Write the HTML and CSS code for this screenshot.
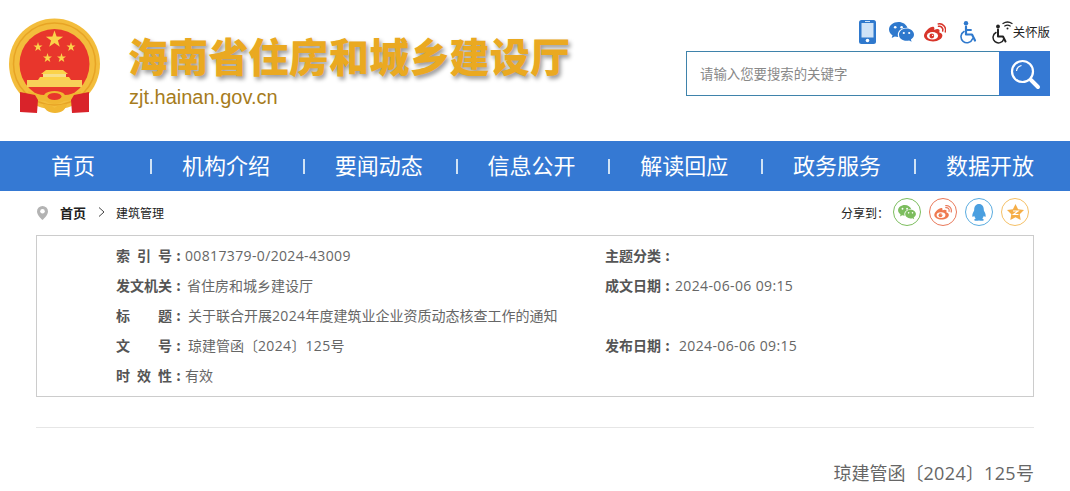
FILE: index.html
```html
<!DOCTYPE html>
<html lang="zh-CN">
<head>
  <meta charset="UTF-8">
  <title>海南省住房和城乡建设厅</title>
  <link rel="stylesheet" href="styles.css">
</head>
<body>
  <svg class="defs" width="0" height="0">
    <symbol id="wechat" viewBox="0 0 25 21">
      <path d="M9.5 0C4.3 0 0 3.3 0 7.5c0 2.4 1.4 4.4 3.5 5.8L2.7 16l3.1-1.6c1.1.3 2.2.5 3.4.5-.3-.8-.4-1.5-.4-2.2C8.800 8.700 12.600 5.600 18.500 5.800 17.300 2.400 13.700 0 9.500 0z"/>
      <path d="M25 12.700c0-3.400-3.300-6.100-7.500-6.100S10 9.300 10 12.700s3.300 6.100 7.500 6.100c.9 0 1.800-.1 2.600-.4l2.500 1.400-.7-2.300c1.600-1.100 3.100-2.800 3.100-4.800z"/>
      <circle cx="6.200" cy="5.200" r="1.300" fill="#fff"/>
      <circle cx="12.600" cy="5.200" r="1.300" fill="#fff"/>
      <circle cx="14.800" cy="11" r="1.100" fill="#fff"/>
      <circle cx="20.200" cy="11" r="1.100" fill="#fff"/>
    </symbol>
    <symbol id="weibo" viewBox="0 0 22 19">
      <path d="M9.200 18.500C4.300 18.500 0 16.200 0 12.800c0-1.800 1.100-3.800 3.100-5.800 2.700-2.700 5.800-3.900 6.900-2.800.5.500.5 1.300.2 2.300-.2.500.4.200.4.200 2.100-.9 4-.9 4.700.1.400.5.300 1.300 0 2.100-.2.400 0 .5.300.6 1.300.4 2.800 1.400 2.800 3.100 0 2.900-4 5.900-9.400 5.900z"/>
      <ellipse cx="8.500" cy="12.800" rx="5.600" ry="3.700" fill="#fff"/>
      <circle cx="7.800" cy="13" r="2.400"/>
      <circle cx="8.600" cy="12.400" r=".6" fill="#fff"/>
      <path d="M14.500 3.300c2.500-.5 5 1.800 4.200 4.800" fill="none" stroke="currentColor" stroke-width="1.500" stroke-linecap="round"/>
      <path d="M14.200 .9c4.300-.9 8.500 3 7.100 8" fill="none" stroke="currentColor" stroke-width="1.500" stroke-linecap="round"/>
    </symbol>
  </svg>

  <header class="top">
    <svg class="emblem" width="100" height="100" viewBox="5 17 100 100">
      <circle cx="54.500" cy="64" r="45.500" fill="#f3bd3c"/>
      <circle cx="54.500" cy="64" r="41" fill="none" stroke="#e7a425" stroke-width="1.500"/>
      <circle cx="54.500" cy="64" r="35" fill="#e8362c"/>
      <polygon fill="#fbd34a" points="54.500,30.500 56.600,36.600 63.100,36.700 57.900,40.600 59.800,46.800 54.500,43.100 49.200,46.800 51.100,40.600 45.900,36.700 52.400,36.600"/>
      <polygon fill="#fbd34a" points="38,42 39.100,45.400 42.500,45.400 39.800,47.500 40.800,51 38,48.900 35.200,51 36.200,47.500 33.500,45.400 36.900,45.400"/>
      <polygon fill="#fbd34a" points="71,42 72.100,45.400 75.500,45.400 72.800,47.500 73.800,51 71,48.900 68.200,51 69.200,47.500 66.500,45.400 69.900,45.400"/>
      <polygon fill="#fbd34a" points="47.500,53 48.600,56.400 52,56.400 49.300,58.500 50.300,62 47.500,59.900 44.700,62 45.700,58.500 43,56.400 46.400,56.400"/>
      <polygon fill="#fbd34a" points="61.500,53 62.600,56.400 66,56.400 63.300,58.500 64.300,62 61.500,59.900 58.700,62 59.700,58.500 57,56.400 60.400,56.400"/>
      <path d="M46 70h17l5 4h-27zM40 77h29l2 3H38z" fill="#fbd34a"/>
      <rect x="43" y="74" width="23" height="3" fill="#f7e08a"/>
      <rect x="27" y="80" width="55" height="7" fill="#f8cf59"/>
      <path d="M28 91c7 2 12 4 16 4 2-3 6-4 10.500-4s8.500 1 10.500 4c4 0 9-2 16-4l-2 6c-6 3-11 4-15 4-3 2-6 3-9.500 3s-6.500-1-9.500-3c-4 0-9-1-15-4z" fill="#f0b631"/>
      <ellipse cx="54.500" cy="96.500" rx="7" ry="3.500" fill="#e8362c"/>
      <path d="M20 92l15 3 3 5-1 13-17-1zM89 92l-15 3-3 5 1 13 17-1z" fill="#d9232a"/>
      <path d="M43 104c4 0 8 1 11.500 4 3.500-3 7.500-4 12.500-4-1 5-5 9-12 9s-11-4-12-9z" fill="#f0b631"/>
    </svg>
    <div class="brand">
      <div class="site-name">海南省住房和城乡建设厅</div>
      <div class="site-url">zjt.hainan.gov.cn</div>
    </div>
    <div class="tools">
      <div class="tool-icons">
        <svg class="ic-blue ic-phone" width="17" height="24" viewBox="0 0 17 24">
          <rect width="17" height="24" rx="2.500" fill="#2f79cd"/>
          <rect x="2.500" y="3" width="12" height="14.500" fill="#cfe3f7"/>
          <rect x="6" y="1" width="5" height="1" fill="#cfe3f7"/>
          <circle cx="8.500" cy="20.500" r="1.800" fill="#fff"/>
        </svg>
        <svg class="ic-blue" width="25" height="21"><use href="#wechat"/></svg>
        <svg class="ic-red" width="22" height="19"><use href="#weibo"/></svg>
        <svg class="ic-blue" width="18" height="23" viewBox="0 0 18 23">
          <circle cx="6" cy="2.200" r="2.200" fill="#2f79cd"/>
          <path d="M6 5.500v8h6l3 6" fill="none" stroke="#2f79cd" stroke-width="2.200" stroke-linecap="round" stroke-linejoin="round"/>
          <path d="M6 9h5" stroke="#2f79cd" stroke-width="1.800" stroke-linecap="round"/>
          <path d="M4 10.500a6 6 0 1 0 8.600 7.300" fill="none" stroke="#2f79cd" stroke-width="1.600" stroke-linecap="round"/>
        </svg>
        <div class="care">
          <svg width="21" height="23" viewBox="0 0 21 23">
            <circle cx="6" cy="5.500" r="1.900" fill="#222"/>
            <path d="M6 8.500v7h5l2.500 5" fill="none" stroke="#222" stroke-width="2" stroke-linecap="round" stroke-linejoin="round"/>
            <path d="M4 11.500a5.500 5.500 0 1 0 7.800 6.500" fill="none" stroke="#222" stroke-width="1.500" stroke-linecap="round"/>
            <path d="M11 2.500a8 8 0 0 1 9 0M12.800 5a5 5 0 0 1 5.400 0" fill="none" stroke="#222" stroke-width="1.300" stroke-linecap="round"/>
            <circle cx="15.500" cy="7.500" r="1" fill="#222"/>
          </svg>
          <span>关怀版</span>
        </div>
      </div>
      <div class="search">
        <div class="search-text">请输入您要搜索的关键字</div>
        <div class="search-btn">
          <svg width="32" height="32" viewBox="0 0 32 32">
            <circle cx="13.500" cy="13.500" r="10.500" fill="none" stroke="#fff" stroke-width="2.200"/>
            <path d="M7.500 13a6.500 6.500 0 0 1 5-5.500" fill="none" stroke="#fff" stroke-width="1.200"/>
            <path d="M22 22l7 7" stroke="#fff" stroke-width="4" stroke-linecap="round"/>
          </svg>
        </div>
      </div>
    </div>
  </header>

  <nav class="nav">
    <a href="#">首页</a>
    <a href="#">机构介绍</a>
    <a href="#">要闻动态</a>
    <a href="#">信息公开</a>
    <a href="#">解读回应</a>
    <a href="#">政务服务</a>
    <a href="#">数据开放</a>
  </nav>

  <div class="main">
    <div class="crumbs">
      <svg class="pin" width="11" height="14" viewBox="0 0 11 14">
        <path d="M5.500 0a5.500 5.500 0 0 0-5.500 5.500C0 9.500 5.500 14 5.500 14S11 9.500 11 5.500A5.500 5.500 0 0 0 5.500 0z" fill="#b3b3b3"/>
        <circle cx="5.500" cy="5.300" r="2.300" fill="#fff"/>
      </svg>
      <b class="crumb-home">首页</b>
      <svg width="7" height="10" viewBox="0 0 7 10"><path d="M1 .5 6 5 1 9.500" fill="none" stroke="#444"/></svg>
      <span class="crumb-now">建筑管理</span>
      <div class="share">
        <span class="share-label">分享到：</span>
        <a class="share-btn green"><svg width="18" height="15"><use href="#wechat"/></svg></a>
        <a class="share-btn orange"><svg width="18" height="15"><use href="#weibo"/></svg></a>
        <a class="share-btn sky">
          <svg width="14" height="17" viewBox="0 0 14 17"><path d="M7 0C3.800 0 2.200 2.500 2.200 5.500c0 1-.2 1.500-.8 2.500C.5 9.500 0 11.500.5 12.800c.4.500 1.200-.3 1.600-1 .3 1.200.9 2.100 1.700 2.800-1 .4-1.800 1-1.500 1.600.4.800 3 .8 4.700.3 1.700.5 4.300.5 4.700-.3.300-.6-.5-1.200-1.500-1.600.8-.7 1.400-1.600 1.700-2.800.4.700 1.200 1.500 1.600 1C14 11.500 13.500 9.500 12.600 8c-.6-1-.8-1.500-.8-2.500C11.800 2.500 10.200 0 7 0z"/></svg>
        </a>
        <a class="share-btn amber">
          <svg width="17" height="16" viewBox="0 0 17 16"><path d="M8.500 0l2.600 5.300 5.900.8-4.300 4.100 1 5.800-5.200-2.700-5.200 2.700 1-5.800L0 6.100l5.900-.8z"/><path d="M6 7h5l-4.500 3.500h5" fill="none" stroke="#fff" stroke-width="1.200"/></svg>
        </a>
      </div>
    </div>

    <div class="info">
      <div class="info-row">
        <div class="info-cell"><b class="label"><span class="name">索引号</span><i>:</i></b><span class="num">00817379-0/2024-43009</span></div>
        <div class="info-cell"><b class="label"><span class="name">主题分类</span><i>:</i></b></div>
      </div>
      <div class="info-row">
        <div class="info-cell"><b class="label"><span class="name">发文机关</span><i>:</i></b><span class="wide">省住房和城乡建设厅</span></div>
        <div class="info-cell"><b class="label"><span class="name">成文日期</span><i>:</i></b><span class="num date">2024-06-06 09:15</span></div>
      </div>
      <div class="info-row">
        <div class="info-cell"><b class="label"><span class="name">标题</span><i>:</i></b><span class="wider">关于联合开展<span class="num">2024</span>年度建筑业企业资质动态核查工作的通知</span></div>
      </div>
      <div class="info-row">
        <div class="info-cell"><b class="label"><span class="name">文号</span><i>:</i></b><span class="wider">琼建管函〔<span class="num">2024</span>〕<span class="num">125</span>号</span></div>
        <div class="info-cell"><b class="label"><span class="name">发布日期</span><i>:</i></b><span class="num pub">2024-06-06 09:15</span></div>
      </div>
      <div class="info-row">
        <div class="info-cell"><b class="label"><span class="name">时效性</span><i>:</i></b><span>有效</span></div>
      </div>
    </div>

    <hr class="rule">
    <div class="doc-no">琼建管函〔<span class="num">2024</span>〕<span class="num">125</span>号</div>
  </div>
</body>
</html>
```

FILE: styles.css
```css
:root {
  --blue: #3579d3;
  --cjk: "Noto Sans CJK SC", sans-serif;
}

* {
  box-sizing: border-box;
}

body {
  margin: 0;
  height: 491px;
  overflow: hidden;
  background: white;
  color: #666;
  font-family: "Open Sans", "Noto Sans CJK SC", sans-serif;
}

.defs {
  display: block;
}

/* header */
.top {
  display: flex;
  height: 141px;
  padding: 17px 20px 0 5px;
}

.brand {
  margin-left: 25px;
  padding-top: 18px;
}

.site-name {
  height: 40px;
  margin-left: -2px;
  font: 900 40px/40px var(--cjk);
  letter-spacing: 0.2px;
  color: #eaa921;
  white-space: nowrap;
  text-shadow: 2px 3px 4px rgba(0,0,0,0.4);
}

.site-url {
  margin: 10px 0 0 -1px;
  font: 20px/24px "Liberation Sans", sans-serif;
  color: #a67c1c;
}

.tools {
  width: 364px;
  margin-left: auto;
}

.tool-icons {
  display: flex;
  justify-content: flex-end;
  align-items: center;
  gap: 14px;
  height: 24px;
  margin-top: 3px;
}

.ic-blue {
  fill: #2f79cd;
  color: #2f79cd;
}

.ic-phone {
  margin-right: -1px;
}

.ic-red {
  margin-left: -4px;
  fill: #d8352a;
  color: #d8352a;
}

.care {
  display: flex;
  align-items: center;
  font: 12.4px/24px var(--cjk);
  color: #222;
}

.search {
  display: flex;
  height: 45px;
  margin-top: 7px;
  border: 1px solid #3f83ab;
  border-right: none;
}

.search-text {
  flex: 1;
  padding-left: 13px;
  font: 13.4px/42px var(--cjk);
  color: #888;
}

.search-btn {
  display: flex;
  align-items: center;
  justify-content: center;
  width: 51px;
  margin: -1px 0;
  background: var(--blue);
}

/* nav */
.nav {
  display: flex;
  height: 50px;
  background: var(--blue);
}

.nav a {
  width: 152.8px;
  padding-right: 1px;
  font: 22px/46px var(--cjk);
  color: white;
  text-align: center;
  text-decoration: none;
  white-space: nowrap;
  background: linear-gradient(#cfe2f5, #cfe2f5) left center / 2px 15px no-repeat;
}

.nav a:first-child {
  width: 150px;
  padding-right: 4px;
  background: none;
}

/* content */
.main {
  padding: 0 36px;
}

.crumbs {
  display: flex;
  align-items: center;
  height: 44px;
  padding: 0 0 2px 1px;
  font-family: var(--cjk);
  color: #222;
}

.pin {
  margin-top: 2px;
}

.crumb-home {
  margin: 0 12px 0 12px;
  font-size: 13px;
}

.crumb-now {
  margin-left: 11px;
  font-size: 12px;
}

.share {
  display: flex;
  align-items: center;
  gap: 8px;
  margin-left: auto;
  margin-right: 5px;
}

.share-label {
  margin-right: -4px;
  font-size: 12px;
  white-space: nowrap;
}

.share-btn {
  display: flex;
  align-items: center;
  justify-content: center;
  width: 28px;
  height: 28px;
  border: 1px solid;
  border-radius: 50%;
}

.green { color: #7cbd5e; fill: #7cbd5e; }
.orange { color: #e9795a; fill: #ef7a50; }
.sky { color: #5aace0; fill: #4a9fe0; }
.amber { color: #f5c066; fill: #f5ae48; }

.info {
  padding: 5px 0 5px 79px;
  border: 1px solid #ccc;
}

.info-row {
  display: grid;
  grid-template-columns: 489px 1fr;
  height: 30px;
  font: 14px/30px "Open Sans", "Noto Sans CJK SC", sans-serif;
  color: #666;
}

.info-cell {
  display: flex;
  height: 29px;
  line-height: 29px;
  white-space: nowrap;
}

.label {
  display: flex;
  width: 69px;
  font-family: var(--cjk);
  font-weight: 700;
  color: #555;
}

.label i {
  width: 13px;
  font-style: normal;
  text-align: center;
}

.name {
  width: 56px;
  text-align-last: justify;
}

.num {
  font-family: "Open Sans", sans-serif;
  letter-spacing: 0.36px;
}

.date {
  margin-left: 1px;
}

.pub {
  margin-left: 5px;
}

.wide {
  margin-left: 2px;
}

.wider {
  margin-left: 3px;
}

.rule {
  height: 1px;
  margin: 30px 0 0;
  border: none;
  background: #e6e6e6;
}

.doc-no {
  margin-top: 32px;
  font: 18px/24px var(--cjk);
  color: #666;
  text-align: right;
}
```
